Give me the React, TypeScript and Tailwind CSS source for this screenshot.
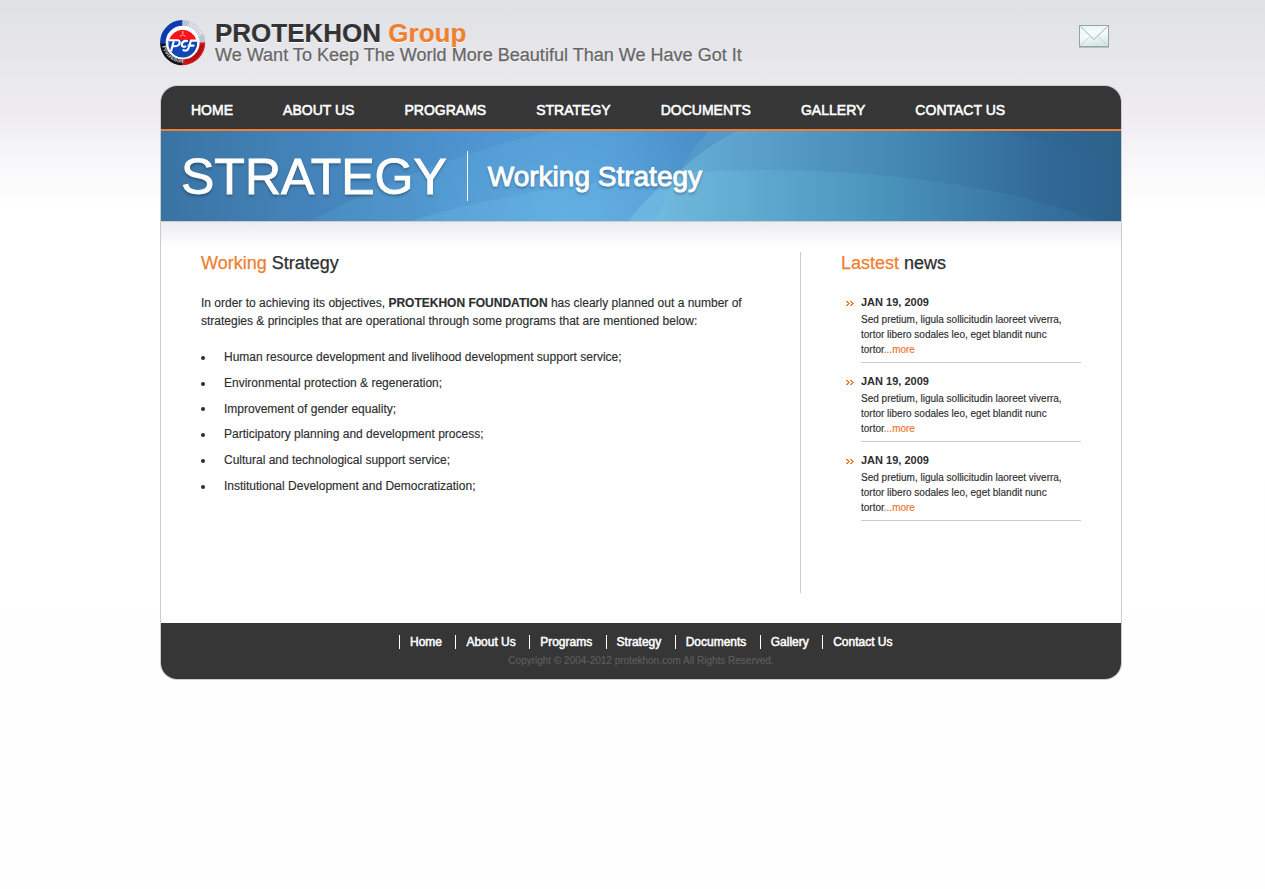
import React from "react";

const NAV = ["Home", "About Us", "Programs", "Strategy", "Documents", "Gallery", "Contact Us"];

const PRINCIPLES = [
  "Human resource development and livelihood development support service;",
  "Environmental protection & regeneration;",
  "Improvement of gender equality;",
  "Participatory planning and development process;",
  "Cultural and technological support service;",
  "Institutional Development and Democratization;",
];

function Logo() {
  return (
    <svg width="46" height="46" viewBox="0 0 46 46" className="block shrink-0">
      <defs>
        <path id="ringText" d="M2.2 25 A20.6 20.6 0 0 0 43 25" />
      </defs>
      <circle cx="22.6" cy="22.6" r="20" fill="#fff" />
      <g fill="none" strokeWidth="5.6">
        <path d="M2.9 24 A19.8 19.8 0 0 1 22.6 2.9" stroke="#0a3cae" />
        <path d="M22.6 2.9 A19.8 19.8 0 0 1 42.4 23" stroke="#bcc4d3" />
        <path d="M29 4 A19.8 19.8 0 0 1 41 15" stroke="#eef0f5" strokeDasharray="1 1" />
        <path d="M42.4 22.6 A19.8 19.8 0 0 1 22.6 42.4" stroke="#d3141c" />
        <path d="M22.6 42.4 A19.8 19.8 0 0 1 2.9 23.5" stroke="#111" />
      </g>
      <text fontSize="6" fontWeight="bold" fill="#d5d5d5" fontFamily="Liberation Serif, serif">
        <textPath href="#ringText" startOffset="1" textLength="29">Protekhon</textPath>
      </text>
      <text fontSize="5.4" fill="#5a0d12" fontFamily="Liberation Serif, serif">
        <textPath href="#ringText" startOffset="32" textLength="27">Foundation</textPath>
      </text>
      <path d="M9 20 A14.3 14.3 0 0 1 36.4 20 Z" fill="#f5141a" />
      <path d="M8.5 20 H36.8 A14.3 14.3 0 0 1 8.5 26 Z" fill="#1148b8" />
      <path d="M20.2 16.5 Q22.8 13.4 25.4 16.5 M22.8 11 V14" stroke="#ffb5a8" strokeWidth="1.1" fill="none" />
      <g stroke="#fff" strokeWidth="2.1" fill="none" strokeLinecap="round" strokeLinejoin="round">
        <path d="M9.5 20.3 H17.8 Q21 21.2 19 24.6 Q17.2 26.6 13.6 26.2 M13.6 21.8 L11.2 30.6" />
        <path d="M27 21 Q22.4 20.4 21.8 24.6 Q22 27.4 25.4 26.6" />
        <path d="M36.6 20.6 H30.8 Q29.4 27 27.6 29.8 Q26 31 23.5 30.2 M28.6 25.6 H33.6" />
      </g>
    </svg>
  );
}

function Envelope() {
  return (
    <svg width="32" height="24" viewBox="0 0 32 24" className="block">
      <defs>
        <linearGradient id="paper" x1="0" y1="0" x2="0.3" y2="1">
          <stop offset="0" stopColor="#e6f3f1" />
          <stop offset="0.5" stopColor="#f8fdfd" />
          <stop offset="1" stopColor="#d9e8e6" />
        </linearGradient>
      </defs>
      <path d="M1 23.5 H31" stroke="#b7bfc0" strokeWidth="1" />
      <rect x="1.5" y="1.5" width="29" height="21" fill="url(#paper)" stroke="#90a6a5" />
      <path d="M2.5 21.5 L12 12.5 M29.5 21.5 L20 12.5" stroke="#c3d6d3" fill="none" />
      <path d="M2.5 2.5 L16 15.5 L29.5 2.5" stroke="#9bb5b2" fill="none" />
    </svg>
  );
}

function BannerArt() {
  return (
    <svg width="960" height="90" viewBox="0 0 960 90" className="absolute inset-0 block">
      <defs>
        <linearGradient id="base" x1="0" x2="1" y1="0" y2="0">
          <stop offset="0" stopColor="#3973a3" />
          <stop offset="0.12" stopColor="#4280b5" />
          <stop offset="0.3" stopColor="#4c91cd" />
          <stop offset="0.46" stopColor="#4f95d3" />
          <stop offset="0.57" stopColor="#478bc5" />
          <stop offset="1" stopColor="#316a9c" />
        </linearGradient>
        <radialGradient id="glow" gradientUnits="userSpaceOnUse" cx="405" cy="100" r="150">
          <stop offset="0" stopColor="#66b2e9" stopOpacity="0.7" />
          <stop offset="1" stopColor="#5ba9dd" stopOpacity="0" />
        </radialGradient>
        <linearGradient id="sweep" gradientUnits="userSpaceOnUse" x1="495" x2="960" y1="0" y2="0">
          <stop offset="0" stopColor="#69b1db" />
          <stop offset="0.2" stopColor="#5ba1cb" />
          <stop offset="0.52" stopColor="#4488b3" />
          <stop offset="0.84" stopColor="#316898" />
          <stop offset="1" stopColor="#2c618a" />
        </linearGradient>
        <linearGradient id="arc" gradientUnits="userSpaceOnUse" x1="150" x2="549" y1="0" y2="0">
          <stop offset="0" stopColor="#63b2dd" stopOpacity="0.16" />
          <stop offset="0.6" stopColor="#63b2dd" stopOpacity="0.3" />
          <stop offset="1" stopColor="#63b2dd" stopOpacity="0.08" />
        </linearGradient>
        <linearGradient id="wave" gradientUnits="userSpaceOnUse" x1="470" x2="935" y1="0" y2="0">
          <stop offset="0" stopColor="#7cc4e6" stopOpacity="0.5" />
          <stop offset="0.5" stopColor="#55a9ca" stopOpacity="0.35" />
          <stop offset="1" stopColor="#3678a6" stopOpacity="0.25" />
        </linearGradient>
      </defs>
      <rect width="960" height="90" fill="url(#base)" />
      <path d="M150 90 Q250 34 390 0 H549 Q520 40 466 90 Z" fill="url(#arc)" />
      <rect width="960" height="90" fill="url(#glow)" />
      <path d="M250 90 Q360 55 523 44 L492 90 Z" fill="#6ebbe6" fillOpacity="0.3" />
      <path d="M494 90 Q503 66 517 42 Q540 18 575 0 H960 V90 Z" fill="url(#sweep)" />
      <path d="M517 42 Q530 18 548 0 H575 Q540 18 517 42 Z" fill="#5598ca" />
      <path d="M467 90 Q488 62 517 42 Q503 66 494 90 Z" fill="#6bb5e1" />
      <path d="M494 90 Q503 66 517 42 Q700 30 860 66 Q900 76 937 90 Z" fill="url(#wave)" />
      <path d="M835 0 Q905 12 960 36 V0 Z" fill="#2d6289" fillOpacity="0.3" />
    </svg>
  );
}

function NewsItem() {
  return (
    <article className="mb-[9px] flex">
      <svg width="20" height="18" viewBox="0 0 20 18" className="block shrink-0" shapeRendering="crispEdges">
        <path
          d="M5 8h2v1h1v1h1v1h-1v1h-1v1h-2v-1h1v-1h1v-1h-1v-1h-1z M9 8h2v1h1v1h1v1h-1v1h-1v1h-2v-1h1v-1h1v-1h-1v-1h-1z"
          fill="#ef7f35"
        />
      </svg>
      <div className="w-[220px] border-b border-[#ccc] pb-[5px]">
        <h3 className="mb-px text-[11px] font-bold leading-[18px]">JAN 19, 2009</h3>
        <p className="text-[10px] leading-[15px] [-webkit-text-stroke:0.15px]">
          Sed pretium, ligula sollicitudin laoreet viverra, tortor libero sodales leo, eget blandit nunc tortor
          <a className="text-[#f1702b]">...more</a>
        </p>
      </div>
    </article>
  );
}

export default function App() {
  return (
    <div className="h-[889px] w-full overflow-hidden bg-[linear-gradient(#dfe1e4_0px,#e6e6ea_50px,#edebf0_105px,#ffffff_205px,#ffffff_400px,#fefefe_889px)] font-['Liberation_Sans',Arial,sans-serif] text-[#2d2e30]">
      <div className="ml-[160px] w-[962px]">
        <header className="flex h-[85px] justify-between">
          <div className="flex pt-5">
            <Logo />
            <div className="ml-[9px] [text-shadow:0_1px_0_#fff]">
              <h1 className="text-[26px] font-bold leading-[26px] text-[#333] [-webkit-text-stroke:0.2px]">
                PROTEKHON <span className="text-[#f08030]">Group</span>
              </h1>
              <p className="whitespace-nowrap text-[18px] leading-[18px] tracking-[0.02px] text-[#666] [-webkit-text-stroke:0.25px]">
                We Want To Keep The World More Beautiful Than We Have Got It
              </p>
            </div>
          </div>
          <div className="mr-3 mt-6">
            <Envelope />
          </div>
        </header>

        <div className="h-[595px] overflow-hidden rounded-[17px] border border-[#ccc] bg-white">
          <nav className="flex h-[45px] gap-[50px] border-b-2 border-[#ef7f32] bg-[#363636] pl-[30px] text-[14px] uppercase leading-[48px] tracking-[0.008px] text-white [-webkit-text-stroke:0.55px_#fff]">
            {NAV.map((n) => (
              <a key={n} className="whitespace-nowrap">{n}</a>
            ))}
          </nav>

          <section className="relative h-[90px]">
            <BannerArt />
            <div className="relative flex h-full items-center pl-5 text-white [text-shadow:0_2px_3px_rgba(0,0,0,0.35)]">
              <h2 className="h-[50px] border-r border-white pr-5 text-[50px] leading-[52px] [-webkit-text-stroke:0.9px_#fff]">STRATEGY</h2>
              <p className="pl-5 pt-[2px] text-[28px] leading-[50px] [-webkit-text-stroke:0.9px_#fff]">Working Strategy</p>
            </div>
          </section>

          <main className="flex h-[402px] border-t border-[#ccc] bg-[linear-gradient(#edebf0_0px,#ffffff_26px)] pt-[30px]">
            <div className="h-[341px] w-[640px] border-r border-[#ccc] pl-10">
              <h2 className="text-[18px] leading-[22px] [-webkit-text-stroke:0.25px]">
                <span className="text-[#f08030]">Working</span> Strategy
              </h2>
              <p className="mt-5 w-[560px] text-[12px] leading-[18px] [-webkit-text-stroke:0.15px]">
                In order to achieving its objectives, <b>PROTEKHON FOUNDATION</b> has clearly planned out a number of
                strategies &amp; principles that are operational through some programs that are mentioned below:
              </p>
              <ul className="mt-[15px] text-[12px] leading-[25.8px] [-webkit-text-stroke:0.15px]">
                {PRINCIPLES.map((p) => (
                  <li key={p} className="flex items-center">
                    <span className="mr-[19px] size-1 rounded-full bg-[#2d2e30]" />
                    {p}
                  </li>
                ))}
              </ul>
            </div>
            <aside className="w-[280px] pl-10">
              <h2 className="mb-[19px] text-[18px] leading-[22px] [-webkit-text-stroke:0.25px]">
                <span className="text-[#f08030]">Lastest</span> news
              </h2>
              <NewsItem />
              <NewsItem />
              <NewsItem />
            </aside>
          </main>

          <footer className="h-[56px] bg-[#363636] pt-3 text-center">
            <div className="flex justify-center pl-[9.5px] text-[12px] leading-[14px] text-white">
              {NAV.map((n) => (
                <a key={n} className="mr-[13.4px] border-l border-white pl-[10px] last:mr-0 [-webkit-text-stroke:0.5px_#fff]">
                  {n}
                </a>
              ))}
            </div>
            <p className="mt-[5px] text-[10px] leading-[14px] text-[#5e5e5e] [-webkit-text-stroke:0.15px]">
              Copyright © 2004-2012 protekhon.com All Rights Reserved.
            </p>
          </footer>
        </div>
      </div>
    </div>
  );
}
